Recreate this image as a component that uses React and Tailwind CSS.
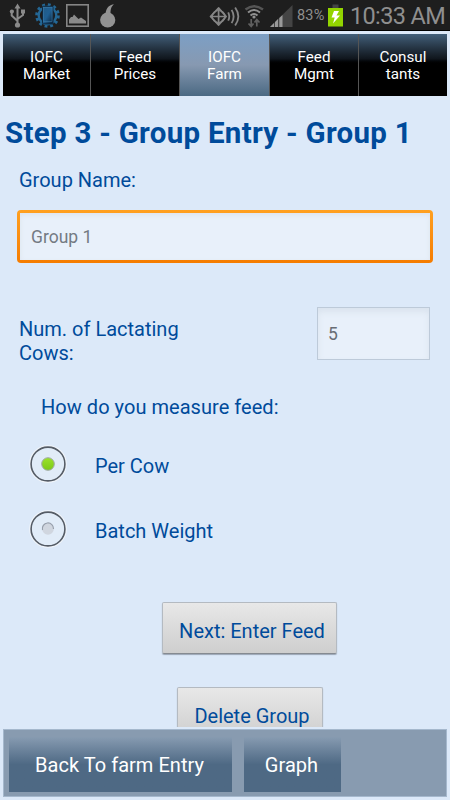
import React from "react";

const tabs = [
  { lines: ["IOFC", "Market"] },
  { lines: ["Feed", "Prices"] },
  { lines: ["IOFC", "Farm"], active: true },
  { lines: ["Feed", "Mgmt"] },
  { lines: ["Consul", "tants"] },
];

function StatusBar() {
  return (
    <header className="flex h-[31px] shrink-0 items-start border-b border-black bg-[#1e1e1e] text-[#8f8f8f]">
      <svg className="ml-[9px] mt-[3px] h-[25px] w-[17px] shrink-0" viewBox="0 0 17 25" fill="none" stroke="#8a8a8a" strokeWidth="2">
        <path d="M8.5 4V22M2.7 9V12.500L8.5 18M14 9V12L8.5 16" />
        <path d="M8.5 0.5L11.500 5.500H5.500Z" fill="#8a8a8a" stroke="none" />
        <circle cx="8.5" cy="22" r="2.600" fill="#8a8a8a" stroke="none" />
        <circle cx="2.900" cy="8.5" r="2.100" fill="#8a8a8a" stroke="none" />
        <path d="M12 6.500H16V10.500H12Z" fill="#8a8a8a" stroke="none" />
      </svg>
      <svg className="ml-[9px] mt-[3px] h-[25px] w-[25px] shrink-0" viewBox="0 0 25 25">
        <defs>
          <linearGradient id="phone" x1="0" y1="0" x2="1" y2="1">
            <stop offset="0" stopColor="#245b86" />
            <stop offset=".5" stopColor="#1f5f92" />
            <stop offset="1" stopColor="#0b1e33" />
          </linearGradient>
        </defs>
        <circle cx="12.5" cy="12.5" r="10.8" fill="none" stroke="#246795" strokeWidth="3" strokeDasharray="2.83 2.83" />
        <circle cx="12.5" cy="12.5" r="8.8" fill="#1e1e1e" stroke="#246795" strokeWidth="2.4" />
        <rect x="7.500" y="3.3" width="10.500" height="17.6" rx="1" fill="url(#phone)" stroke="#10283e" />
        <rect x="8.500" y="4.5" width="8.500" height="14" fill="none" stroke="#3c7aa6" strokeWidth=".6" />
      </svg>
      <svg className="ml-[6px] mt-[4px] h-[23px] w-[23px] shrink-0" viewBox="0 0 23 23">
        <rect x=".8" y=".8" width="21.4" height="21.4" fill="none" stroke="#858585" strokeWidth="1.6" />
        <path d="M3 19.5V15.500L5 13L6.500 13L8 10.500L12.500 15L15 13.500L20 17V19.5Z" fill="#8a8a8a" />
      </svg>
      <svg className="ml-[11px] mt-[4px] h-[24px] w-[16px] shrink-0" viewBox="0 0 16 24">
        <circle cx="7.7" cy="16" r="7.6" fill="#939393" />
        <path d="M5.500 9.500C6.500 3 10 .8 14 .3C11.500 2.500 10.500 4.500 10.500 9.500Z" fill="#939393" />
      </svg>
      <svg className="ml-[93px] mt-[5px] h-[22px] w-[32px] shrink-0" viewBox="0 0 30 22" preserveAspectRatio="none" fill="none" stroke="#858585">
        <path d="M9 3L16 11.500L9 20L1.500 11.500Z" strokeWidth="1.8" strokeLinejoin="round" />
        <circle cx="9" cy="11.500" r="6" strokeWidth="1.2" />
        <path d="M9 3V20M1.500 11.500H16" strokeWidth="1.6" />
        <path d="M18 7.300Q20 11.500 18 15.700M21.200 4.800Q25 11.500 21.200 18.200M24.500 2.500Q30.500 11.500 24.500 20.500" strokeWidth="1.700" />
      </svg>
      <svg className="ml-[3px] mt-[4px] h-[24px] w-[21px] shrink-0" viewBox="0 0 21 24" fill="none">
        <path d="M1.500 5.500Q10 -1 19 5.500" stroke="#555" strokeWidth="2.500" />
        <path d="M4 8.500Q10 3.500 16 8.500M6.500 11.500Q10 8.500 13.500 11.500" stroke="#909090" strokeWidth="2" />
        <circle cx="10" cy="13" r="1.600" fill="#909090" />
        <path d="M7.200 15V22M4.500 19.500L7.200 22.500L9.500 19.500M12.800 22.500V16M10.500 18.500L12.800 15.500L15.500 18.500" stroke="#606060" strokeWidth="1.700" />
      </svg>
      <svg className="ml-[5px] mt-[5px] h-[22px] w-[23px] shrink-0" viewBox="0 0 23 22">
        <path d="M0 22L22.500 0V22Z" fill="#444" />
        <path d="M0 22L4 18V22ZM5 22V17L8 14V22ZM9.300 22V13L12.500 10V22Z" fill="#999" />
      </svg>
      <span className="ml-[4px] mt-[6px] w-[29px] whitespace-nowrap text-[14.5px] leading-[20px] tracking-[0.2px]">83%</span>
      <svg className="ml-[2px] mt-[4px] h-[23px] w-[15px] shrink-0" viewBox="0 0 15 23">
        <path d="M4.500 .5H10.500V4H4.500Z" fill="#444" />
        <path d="M0 4H15V22.500H0Z" fill="#93d400" />
        <path d="M6 7H11L8.500 11.500H12L5 19.500L6.700 13.500H3.500Z" fill="#fff" />
      </svg>
      <span className="ml-[7px] mt-[2px] whitespace-nowrap text-[23.5px] leading-[28px] tracking-[-0.65px]">10:33 AM</span>
    </header>
  );
}

function Tab({ lines, active }) {
  return (
    <button
      className={
        "flex flex-col items-center justify-center border-r border-[#555] pt-[2px] text-[15.2px] leading-[17.5px] text-white last:border-r-0 " +
        (active
          ? "bg-linear-to-b from-[#7c9fc5] via-[#8799b1] to-[#4b6983]"
          : "bg-linear-to-b from-[#43607b] via-[#10161d] via-40% to-black to-50%")
      }
    >
      <span>{lines[0]}</span>
      <span>{lines[1]}</span>
    </button>
  );
}

function Radio({ label, checked }) {
  return (
    <label className="flex h-[65px] items-center">
      <svg className="h-[38px] w-[38px]" viewBox="0 0 38 38">
        <defs>
          <linearGradient id="green" x1="0" y1="0" x2="0" y2="1">
            <stop offset="0" stopColor="#9be22b" />
            <stop offset="1" stopColor="#7cc918" />
          </linearGradient>
        </defs>
        <circle cx="19" cy="19" r="18" fill="#e3edf9" stroke="#f1f5fa" strokeWidth="1.600" />
        <circle cx="19" cy="19" r="16.900" fill="#e1ecf8" stroke="#555c66" strokeWidth="1.600" />
        {checked ? (
          <circle cx="19" cy="19" r="6.300" fill="url(#green)" stroke="#a0a9a8" />
        ) : (
          <g>
            <circle cx="19" cy="19" r="5.800" fill="#d0d6df" />
            <path d="M13.500 20A5.600 5.600 0 1 1 24.500 19" fill="none" stroke="#969eaa" strokeWidth="1.200" />
          </g>
        )}
      </svg>
      <span className="ml-[28px] mt-[4px]">{label}</span>
    </label>
  );
}

const grayButton =
  "shrink-0 whitespace-nowrap rounded-[2px] border border-[#b4bac1] border-b-[#858a91] bg-linear-to-b from-[#e8e8e8] to-[#cecece] shadow-[0_1px_1px_#9aa5b4] pl-[5px] pt-[5px]";

const blueButton =
  "h-[55px] bg-linear-to-b from-[#879bb1] via-[#4e6984] via-50% to-[#4e6984] pr-[2px] text-[20px] tracking-[0.04px] text-white";

export default function App() {
  return (
    <div className="flex h-[800px] w-[450px] flex-col overflow-hidden bg-[#dce9f9] font-[Roboto,sans-serif] text-[20px] leading-6 text-[#004b9b]">
      <StatusBar />
      <nav className="mx-[3px] mt-[3px] grid h-[62px] shrink-0 grid-cols-[88px_89px_90px_89px_88px]">
        {tabs.map((tab, i) => (
          <Tab key={i} {...tab} />
        ))}
      </nav>
      <main className="flex h-[631px] shrink-0 flex-col overflow-hidden">
        <h1 className="ml-[5px] mt-[19px] whitespace-nowrap text-[29.5px] font-bold leading-9 tracking-[0.28px]">Step 3 - Group Entry - Group 1</h1>
        <div className="ml-[19px] mt-[17px]">Group Name:</div>
        <div className="ml-[17px] mt-[18px] w-[416px] shrink-0 rounded-[4px] bg-linear-to-b from-[#ffa01f] to-[#f57c00] p-[3px]">
          <div className="flex h-[47px] items-center bg-[#e8f0fa] pl-[11px] text-[17.5px] text-[#747a82] shadow-[inset_0_2px_5px_#dce4ed]">Group 1</div>
        </div>
        <div className="ml-[19px] mt-[44px] flex shrink-0">
          <div className="mt-[10px] w-[298px]">
            Num. of Lactating
            <br />
            Cows:
          </div>
          <div className="flex h-[53px] w-[113px] items-center border border-[#bdcad9] bg-[#e8f0fa] pl-[10px] pt-px text-[17.5px] text-[#686d74] shadow-[inset_0_4px_6px_#dae3ee]">5</div>
        </div>
        <div className="ml-[41px] mt-[30px] tracking-[0.04px]">How do you measure feed:</div>
        <div className="ml-[29px] mt-[12px]">
          <Radio label="Per Cow" checked />
          <Radio label="Batch Weight" />
        </div>
        <div className="ml-[49px] mt-[41px] flex shrink-0 flex-col items-center">
          <button className={grayButton + " h-[52px] w-[175px]"}>Next: Enter Feed</button>
          <button className={grayButton + " mt-[33px] h-[52px] w-[146px]"}>Delete Group</button>
        </div>
      </main>
      <footer className="mx-[3px] mt-[2px] flex h-[68px] shrink-0 gap-[12px] border border-[#a5b8cd] bg-[#889bb0] pl-[5px] pt-[7px]">
        <button className={blueButton + " w-[223px]"}>Back To farm Entry</button>
        <button className={blueButton + " w-[97px]"}>Graph</button>
      </footer>
    </div>
  );
}
